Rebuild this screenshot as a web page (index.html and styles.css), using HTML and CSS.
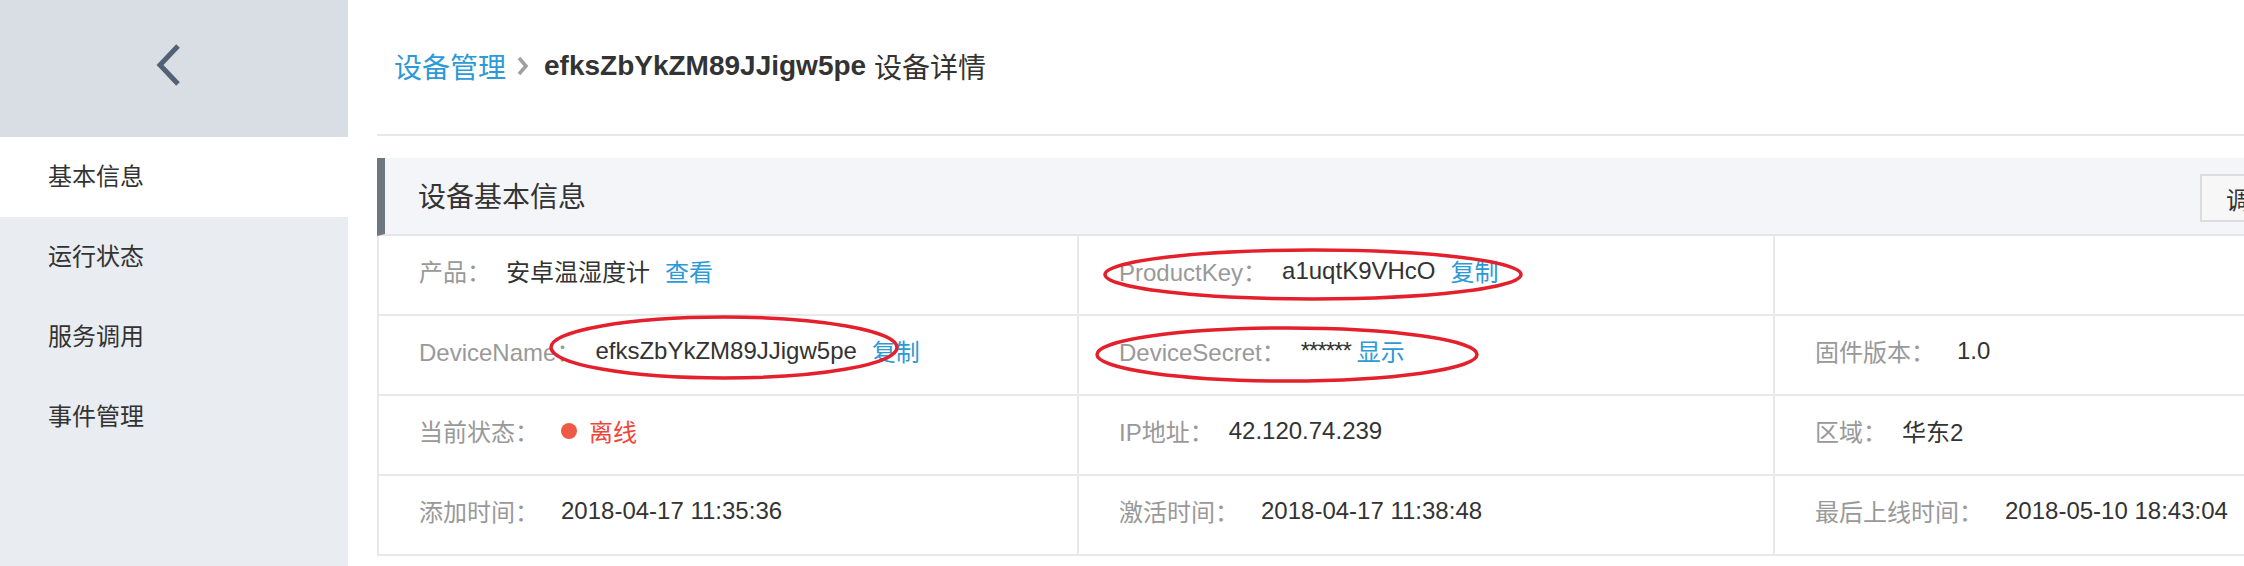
FILE: index.html
```html
<!DOCTYPE html>
<html lang="zh-CN">
<head>
    <meta charset="UTF-8">
    <meta name="viewport" content="width=device-width, initial-scale=1.0">
    <title>设备详情</title>
    <link rel="stylesheet" href="styles.css">
</head>
<body>
    <aside class="sidebar">
        <div class="sidebar-top">
            <svg class="back" width="48" height="48" viewBox="0 0 48 48">
                <path d="M28 5 L10 24 L28 43"/>
            </svg>
        </div>
        <ul class="menu">
            <li class="active">基本信息</li>
            <li>运行状态</li>
            <li>服务调用</li>
            <li>事件管理</li>
        </ul>
    </aside>

    <main class="content">
        <div class="breadcrumb">
            <a class="link">设备管理</a>
            <svg class="crumb-arrow" width="12" height="22" viewBox="0 0 12 22">
                <path d="M2 3 L9 11 L2 19"/>
            </svg>
            <strong>efksZbYkZM89JJigw5pe</strong>
            <span>&nbsp;设备详情</span>
        </div>

        <section class="panel">
            <div class="panel-head">
                <h2>设备基本信息</h2>
                <button class="btn">调试</button>
            </div>

            <div class="info-grid">
                <!-- linha 1 -->
                <div class="cell">
                    <span class="k">产品：</span>
                    <span class="v">安卓温湿度计</span>
                    <a class="link">查看</a>
                </div>
                <div class="cell">
                    <span class="k">ProductKey：</span>
                    <span class="v">a1uqtK9VHcO</span>
                    <a class="link">复制</a>
                    <svg class="mark mark-key" viewBox="0 0 420 53"><ellipse cx="210" cy="26.5" rx="208" ry="24.5"/></svg>
                </div>
                <div class="cell"></div>

                <!-- linha 2 -->
                <div class="cell">
                    <span class="k">DeviceName：</span>
                    <span class="v">efksZbYkZM89JJigw5pe</span>
                    <a class="link">复制</a>
                    <svg class="mark mark-name" viewBox="0 0 350 65"><ellipse cx="175" cy="32.5" rx="173" ry="30.5"/></svg>
                </div>
                <div class="cell">
                    <span class="k">DeviceSecret：</span>
                    <span class="v secret">******</span>
                    <a class="link">显示</a>
                    <svg class="mark mark-secret" viewBox="0 0 384 57"><ellipse cx="192" cy="28.5" rx="190" ry="26.5"/></svg>
                </div>
                <div class="cell">
                    <span class="k k-wide">固件版本：</span>
                    <span class="v">1.0</span>
                </div>

                <!-- linha 3 -->
                <div class="cell">
                    <span class="k k-wide">当前状态：</span>
                    <span class="status-dot"></span>
                    <span class="v offline">离线</span>
                </div>
                <div class="cell">
                    <span class="k">IP地址：</span>
                    <span class="v">42.120.74.239</span>
                </div>
                <div class="cell">
                    <span class="k">区域：</span>
                    <span class="v">华东2</span>
                </div>

                <!-- linha 4 -->
                <div class="cell">
                    <span class="k k-wide">添加时间：</span>
                    <span class="v">2018-04-17 11:35:36</span>
                </div>
                <div class="cell">
                    <span class="k k-wide">激活时间：</span>
                    <span class="v">2018-04-17 11:38:48</span>
                </div>
                <div class="cell">
                    <span class="k k-wide">最后上线时间：</span>
                    <span class="v">2018-05-10 18:43:04</span>
                </div>
            </div>
        </section>
    </main>
</body>
</html>
```

FILE: styles.css
```css
body {
    margin: 0;
    display: flex;
    height: 100vh;
    overflow: hidden;
    background-color: #ffffff;
    font-family: "Liberation Sans", "Noto Sans CJK SC", sans-serif;
    color: #333;
}

/* Menu lateral */
.sidebar {
    width: 348px;
    flex-shrink: 0;
    background-color: #e9ecf0;
}

.sidebar-top {
    height: 137px;
    box-sizing: border-box;
    padding-bottom: 8px;
    background-color: #d9dee5;
    display: flex;
    align-items: center;
    justify-content: center;
}

.back path {
    fill: none;
    stroke: #526175;
    stroke-width: 5;
}

.menu {
    list-style: none;
    margin: 0;
    padding: 0;
}

.menu li {
    height: 80px;
    box-sizing: border-box;
    display: flex;
    align-items: center;
    padding: 0 0 5px 48px;
    font-size: 24px;
    color: #333;
}

.menu li.active {
    background-color: #ffffff;
}

/* Conteudo */
.content {
    flex-shrink: 0;
    width: 2094px;
    padding-left: 29px;
}

.link {
    color: #2c9ad6;
    cursor: pointer;
}

.breadcrumb {
    height: 136px;
    box-sizing: border-box;
    border-bottom: 2px solid #e8e8e8;
    display: flex;
    align-items: center;
    padding: 0 0 2px 17px;
    font-size: 28px;
}

.crumb-arrow {
    margin: 0 15px 0 11px;
}

.crumb-arrow path {
    fill: none;
    stroke: #a0a0a0;
    stroke-width: 3.5;
}

.breadcrumb strong {
    color: #333;
}

.panel {
    margin-top: 22px;
}

.panel-head {
    height: 78px;
    box-sizing: border-box;
    background-color: #f4f5f8;
    border-left: 8px solid #6d7780;
    border-bottom: 2px solid #e3e6ea;
    display: flex;
    align-items: center;
    justify-content: space-between;
    padding: 0 171px 2px 33px;
}

.panel-head h2 {
    margin: 0;
    font-size: 28px;
    font-weight: normal;
    color: #333;
}

.btn {
    height: 48px;
    margin-top: 6px;
    padding: 0 24px;
    border: 2px solid #dcdcdc;
    background-color: #f7f7f7;
    font-family: inherit;
    font-size: 24px;
    color: #333;
}

.info-grid {
    display: grid;
    grid-template-columns: 700px 696px 1fr;
    border-left: 2px solid #e9e9e9;
}

.cell {
    position: relative;
    height: 80px;
    box-sizing: border-box;
    display: flex;
    align-items: center;
    padding: 0 0 9px 40px;
    border-right: 2px solid #e9e9e9;
    border-bottom: 2px solid #e9e9e9;
    font-size: 24px;
    white-space: nowrap;
}

.k {
    color: #999;
    margin-right: 15px;
}

.k-wide {
    margin-right: 22px;
}

.v {
    color: #333;
}

.v + .link {
    margin-left: 15px;
}

.secret {
    letter-spacing: -1px;
}

.secret + .link {
    margin-left: 6px;
}

.status-dot {
    width: 16px;
    height: 16px;
    border-radius: 50%;
    background-color: #ee5a46;
    margin-right: 12px;
}

.offline {
    color: #f0463a;
}

/* marcas vermelhas por cima do texto */
.mark {
    position: absolute;
    overflow: visible;
}

.mark ellipse {
    fill: none;
    stroke: #e3202c;
    stroke-width: 3.5;
}

.mark-key {
    left: 24px;
    top: 12px;
    width: 420px;
    height: 53px;
}

.mark-name {
    left: 170px;
    top: -1px;
    width: 350px;
    height: 65px;
}

.mark-secret {
    left: 16px;
    top: 10px;
    width: 384px;
    height: 57px;
}
```
